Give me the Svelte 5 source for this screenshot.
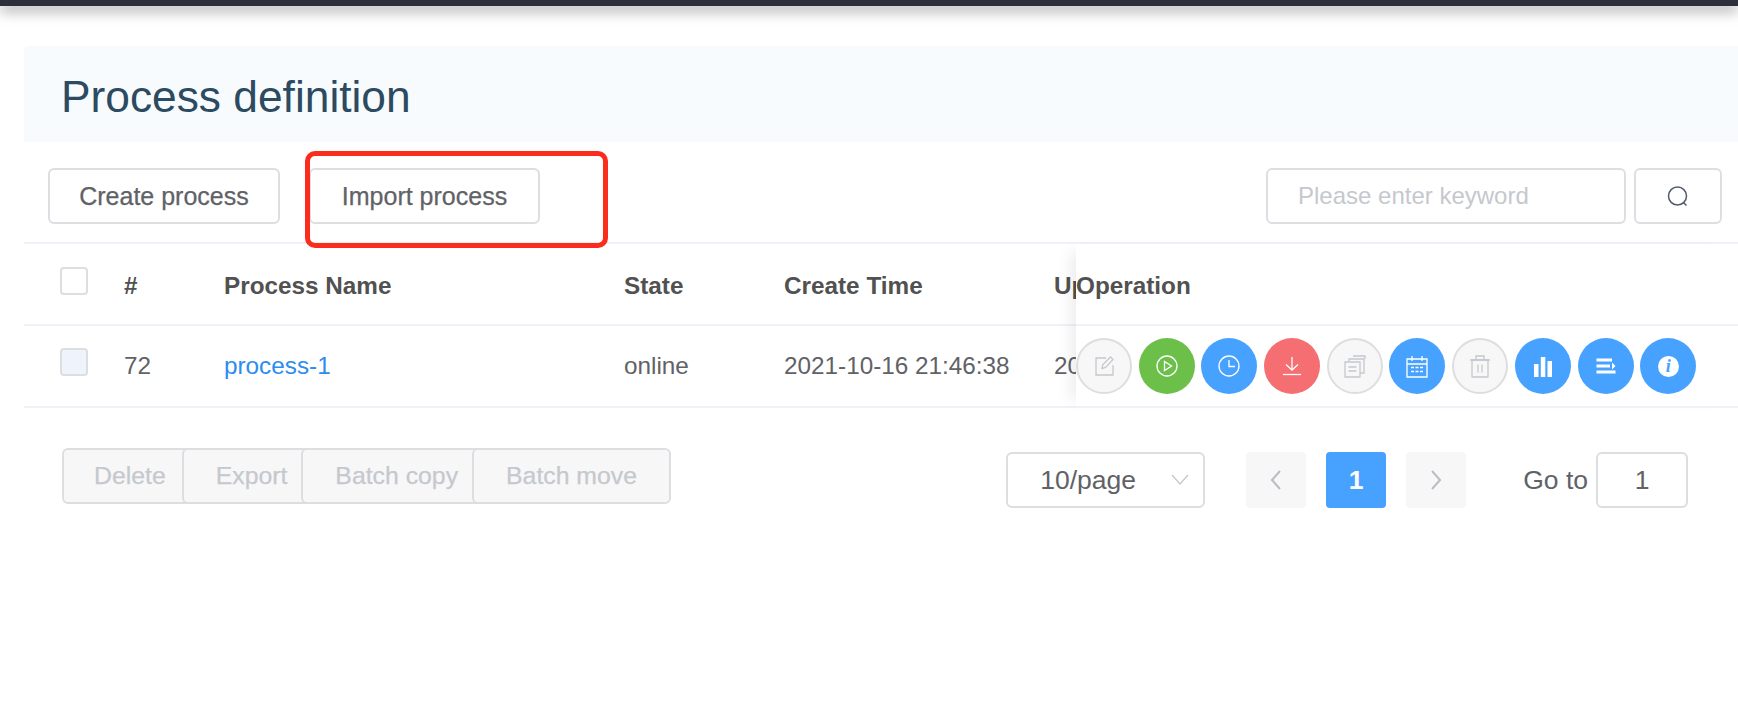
<script>
  const ops = [
    { off: true, body: '<path d="M14 4H4v17h17V11"/><path d="M10 14.500l.7-3.800L18.500 3l2.500 2.500-7.400 8z"/>' },
    { tone: 'green', body: '<circle cx="12" cy="12" r="10"/><path d="M9.500 7.500v9l7-4.500z"/>' },
    { tone: 'blue', body: '<circle cx="12" cy="12" r="10"/><path d="M12 6v6.500h6"/>' },
    { tone: 'red', body: '<path d="M12 3v13"/><path d="M6 10.500l6 5.500 6-5.500"/><path d="M3 20.500h18"/>' },
    { off: true, body: '<path d="M2 8h15v15H2z"/><path d="M6 8V5h15v14h-4"/><path d="M10 2h12v3"/><path d="M5.500 13h8M5.500 17h8"/>' },
    { tone: 'blue', body: '<path d="M2 5h20v18H2z"/><path d="M2 10h20M7 2v5M17 2v5"/><path d="M6 13.500h3M10.500 13.500h3M15 13.500h3M6 17.500h3M10.500 17.500h3M15 17.500h3" stroke-width="1.600"/>' },
    { off: true, body: '<path d="M4 6h16v17H4z"/><path d="M2 6h20M8 6V2h8v4"/><path d="M10 10.500v8M14 10.500v8"/>' },
    { tone: 'blue', fill: true, body: '<path d="M3 10h4.500v13H3zM9.800 3h4.500v20H9.800zM16.500 7H21v16h-4.500z"/>' },
    { tone: 'blue', fill: true, body: '<path d="M2.500 4.500H18v3H2.500zM2.500 10.500H16v3H2.500zM2.500 16.500h19v3h-19zM18 8.500l3.500 3.500-3.500 3.500z"/>' },
    { tone: 'blue', info: true }
  ];
  const bulk = ['Delete', 'Export', 'Batch copy', 'Batch move'];
</script>

<div class="page">
  <div class="topbar"></div>

  <main class="content">
    <header class="title"><h1>Process definition</h1></header>

    <section class="toolbar">
      <div class="actions">
        <button class="btn">Create process</button>
        <button class="btn import">Import process</button>
        <span class="callout"></span>
      </div>
      <div class="search">
        <input class="keyword" placeholder="Please enter keyword" />
        <button class="btn search-btn" aria-label="Search">
          <svg viewBox="0 0 24 24" width="24" height="24" fill="none" stroke="#515a6e" stroke-width="1.500">
            <circle cx="11.500" cy="11" r="9"/><path d="M17.500 17.500l3 3"/>
          </svg>
        </button>
      </div>
    </section>

    <section class="table">
      <div class="main">
        <div class="row head">
          <span class="c-check"><span class="check"></span></span>
          <span class="c-id">#</span>
          <span class="c-name">Process Name</span>
          <span class="c-state">State</span>
          <span class="c-time">Create Time</span>
          <span class="c-up">Update Time</span>
        </div>
        <div class="row">
          <span class="c-check"><span class="check off"></span></span>
          <span class="c-id">72</span>
          <a class="c-name link" href="#p">process-1</a>
          <span class="c-state">online</span>
          <span class="c-time">2021-10-16 21:46:38</span>
          <span class="c-up">2021-10-16 21:46:38</span>
        </div>
      </div>
      <div class="fixed">
        <div class="row head">Operation</div>
        <div class="row">
          {#each ops as op}
            <span class="op {op.tone ?? ''}" class:off={op.off}>
              {#if op.info}
                <span class="info">i</span>
              {:else}
                <svg viewBox="0 0 24 24" width="24" height="24"
                  fill={op.fill ? 'currentColor' : 'none'}
                  stroke={op.fill ? 'none' : 'currentColor'}
                  stroke-width="1.300">{@html op.body}</svg>
              {/if}
            </span>
          {/each}
        </div>
      </div>
    </section>

    <section class="footer">
      <div class="bulk">
        {#each bulk as b}<button class="bulk-btn">{b}</button>{/each}
      </div>
      <div class="pager">
        <div class="select">
          <span>10/page</span>
          <svg viewBox="0 0 18 12" width="18" height="12" fill="none" stroke="#c5c8ce" stroke-width="1.300"><path d="M1 1l8 9 8-9"/></svg>
        </div>
        <div class="pages">
          <span class="page-btn">
            <svg viewBox="0 0 12 20" width="12" height="20" fill="none" stroke="#b8bcc4" stroke-width="2"><path d="M10 1L2 10l8 9"/></svg>
          </span>
          <span class="page-btn current">1</span>
          <span class="page-btn">
            <svg viewBox="0 0 12 20" width="12" height="20" fill="none" stroke="#b8bcc4" stroke-width="2"><path d="M2 1l8 9-8 9"/></svg>
          </span>
        </div>
        <div class="goto">
          <span>Go to</span>
          <span class="goto-box">1</span>
        </div>
      </div>
    </section>
  </main>
</div>

<style>
  :global(body) { margin: 0; background: #fff; }
  .page {
    height: 708px;
    overflow: hidden;
    font-family: "Liberation Sans", Arial, sans-serif;
    font-size: 24.3px;
    color: #606266;
  }
  .topbar {
    height: 6px;
    background: #2d303b;
    box-shadow: 0 4px 14px rgba(0, 0, 0, .5);
  }
  .content { padding: 40px 0 0 24px; }
  .title {
    height: 96px;
    background: #f8fbfe;
    border-radius: 4px 0 0 0;
    display: flex;
    align-items: center;
    padding: 5px 0 0 37px;
    box-sizing: border-box;
  }
  h1 {
    margin: 0;
    font-weight: 400;
    font-size: 44.3px;
    color: #2c4a60;
  }
  .toolbar {
    box-sizing: border-box;
    height: 102px;
    padding: 26px 16px 0 24px;
    display: flex;
    justify-content: space-between;
    align-items: flex-start;
    border-bottom: 2px solid #eef1f8;
  }
  .actions { display: flex; gap: 29px; position: relative; }
  .btn {
    box-sizing: border-box;
    height: 56px;
    width: 232px;
    border: 2px solid #dcdee2;
    border-radius: 6px;
    background: #fff;
    font: inherit;
    font-size: 25px;
    -webkit-text-stroke: .25px #606266;
    color: #606266;
    padding: 1px 0 0;
  }
  .btn.import { width: 231px; }
  .callout {
    position: absolute;
    left: 257px;
    top: -17px;
    width: 303px;
    height: 97px;
    box-sizing: border-box;
    border: 5px solid #fb2b1d;
    border-radius: 10px;
    pointer-events: none;
  }
  .search { display: flex; gap: 8px; }
  .keyword {
    box-sizing: border-box;
    width: 360px;
    height: 56px;
    border: 2px solid #dcdee2;
    border-radius: 6px;
    padding: 0 30px;
    font: inherit;
    font-size: 24px;
    outline: none;
  }
  .keyword::placeholder { color: #c5c8ce; opacity: 1; }
  .search-btn {
    width: 88px;
    display: flex;
    align-items: center;
    justify-content: center;
  }
  .table { display: flex; }
  .main { width: 1052px; flex: none; overflow: hidden; }
  .fixed {
    flex: 1;
    background: #fff;
    box-shadow: -14px 0 14px -8px rgba(0, 0, 0, .07);
    position: relative;
  }
  .row {
    box-sizing: border-box;
    height: 82px;
    display: flex;
    align-items: center;
    white-space: nowrap;
    border-bottom: 2px solid #eef1f6;
  }
  .head { font-weight: 700; color: #515151; padding-top: 4px; }
  .c-check { width: 100px; flex: none; display: flex; padding-left: 36px; box-sizing: border-box; }
  .check {
    box-sizing: border-box;
    width: 28px;
    height: 28px;
    margin-top: -9px;
    border: 2px solid #dcdee2;
    border-radius: 4px;
    background: #fff;
  }
  .head .check { margin-top: -11px; }
  .check.off { background: #eff3fb; }
  .c-id { width: 100px; flex: none; }
  .c-name { width: 400px; flex: none; }
  .c-state { width: 160px; flex: none; }
  .c-time { width: 270px; flex: none; }
  .c-up { flex: none; }
  .link { color: #2d8cf0; text-decoration: none; }
  .op {
    box-sizing: border-box;
    width: 56px;
    height: 56px;
    flex: none;
    margin-right: 6.7px;
    border-radius: 50%;
    display: flex;
    align-items: center;
    justify-content: center;
    color: #fff;
  }
  .blue { background: #47a2ff; }
  .green { background: #6cc04a; }
  .red { background: #f56f72; }
  .off { background: #f7f7f7; border: 2px solid #dcdee2; color: #c5c8ce; }
  .info {
    width: 21px;
    height: 21px;
    border-radius: 50%;
    background: #fff;
    color: #47a2ff;
    font: italic 700 18px/21px "Liberation Serif", serif;
    text-align: center;
  }
  .footer {
    display: flex;
    justify-content: space-between;
    align-items: flex-start;
    padding: 40px 50px 0 38px;
  }
  .bulk { display: flex; }
  .bulk-btn {
    box-sizing: border-box;
    height: 56px;
    padding: 0 32px;
    margin-right: -20px;
    border: 2px solid #dcdee2;
    border-radius: 6px;
    background: #f7f7f7;
    color: #c5c8ce;
    font: inherit;
    font-size: 24.8px;
    -webkit-text-stroke: .25px #c5c8ce;
  }
  .bulk-btn:first-child { padding-left: 30px; margin-right: -18px; }
  .bulk-btn:last-child { margin-right: 0; }
  .pager { display: flex; align-items: center; margin-top: 4px; font-size: 26.5px; }
  .select {
    box-sizing: border-box;
    width: 199px;
    height: 56px;
    margin-right: 41px;
    border: 2px solid #dcdee2;
    border-radius: 6px;
    padding: 0 14px 0 32px;
    display: flex;
    align-items: center;
    justify-content: space-between;
  }
  .pages { display: flex; gap: 20px; margin-right: 57px; }
  .page-btn {
    width: 60px;
    height: 56px;
    border-radius: 4px;
    background: #f7f7f7;
    display: flex;
    align-items: center;
    justify-content: center;
  }
  .current { background: #47a2ff; color: #fff; font-weight: 700; }
  .goto { display: flex; align-items: center; gap: 8px; }
  .goto-box {
    box-sizing: border-box;
    width: 92px;
    height: 56px;
    border: 2px solid #dcdee2;
    border-radius: 6px;
    display: flex;
    align-items: center;
    justify-content: center;
  }
</style>
